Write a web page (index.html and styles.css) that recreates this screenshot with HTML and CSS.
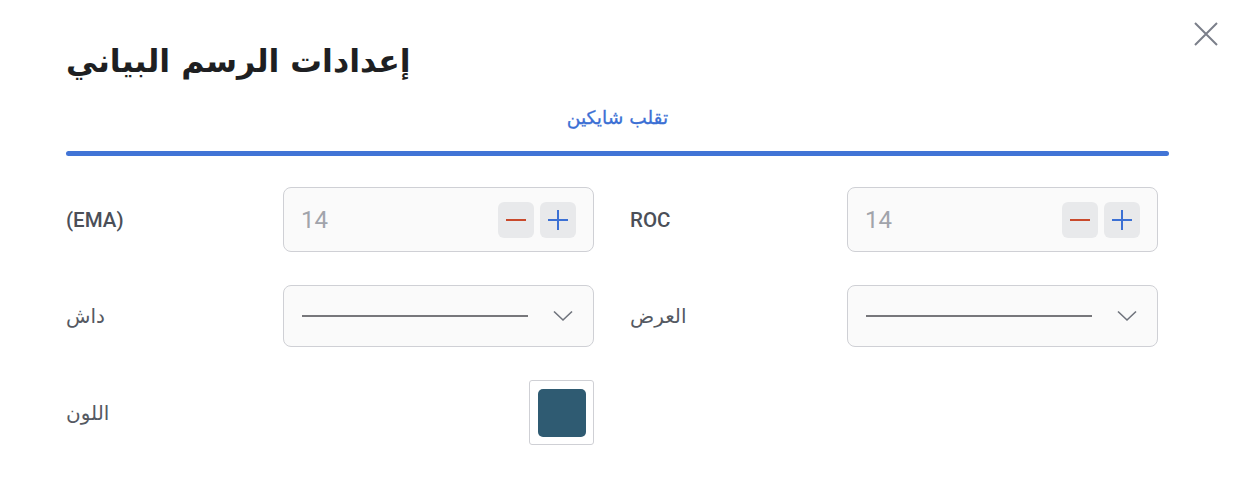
FILE: index.html
```html
<!DOCTYPE html>
<html lang="ar">
<head>
<meta charset="utf-8">
<link rel="stylesheet" href="styles.css">
</head>
<body>
<div class="modal">
  <button class="close" aria-label="إغلاق">
    <svg width="24" height="24" viewBox="0 0 24 24"><path d="M1 1 L23 23 M23 1 L1 23" stroke="#7b7f8a" stroke-width="2" fill="none"/></svg>
  </button>
  <h1 class="title">إعدادات الرسم البياني</h1>
  <div class="tabs">
    <div class="tab">تقلب شايكين</div>
    <div class="tab-bar"></div>
  </div>
  <div class="grid">
    <div class="field">
      <div class="label latin">(EMA)</div>
      <div class="box number">
        <span class="value">14</span>
        <div class="steps">
          <button class="step minus"><svg width="22" height="22" viewBox="0 0 22 22"><path d="M1 11 H21" stroke="#c9492b" stroke-width="2"/></svg></button>
          <button class="step plus"><svg width="22" height="22" viewBox="0 0 22 22"><path d="M1 11 H21 M11 1 V21" stroke="#3b70d4" stroke-width="2"/></svg></button>
        </div>
      </div>
    </div>
    <div class="field">
      <div class="label latin">ROC</div>
      <div class="box number">
        <span class="value">14</span>
        <div class="steps">
          <button class="step minus"><svg width="22" height="22" viewBox="0 0 22 22"><path d="M1 11 H21" stroke="#c9492b" stroke-width="2"/></svg></button>
          <button class="step plus"><svg width="22" height="22" viewBox="0 0 22 22"><path d="M1 11 H21 M11 1 V21" stroke="#3b70d4" stroke-width="2"/></svg></button>
        </div>
      </div>
    </div>
    <div class="field">
      <div class="label">داش</div>
      <div class="box select">
        <span class="line"></span>
        <svg class="chev" width="20" height="12" viewBox="0 0 20 12"><path d="M1 1.5 L10 10 L19 1.5" stroke="#6f737c" stroke-width="1.6" fill="none"/></svg>
      </div>
    </div>
    <div class="field">
      <div class="label">العرض</div>
      <div class="box select">
        <span class="line"></span>
        <svg class="chev" width="20" height="12" viewBox="0 0 20 12"><path d="M1 1.5 L10 10 L19 1.5" stroke="#6f737c" stroke-width="1.6" fill="none"/></svg>
      </div>
    </div>
    <div class="field">
      <div class="label">اللون</div>
      <div class="swatch-wrap"><div class="swatch"><span class="swatch-fill"></span></div></div>
    </div>
  </div>
</div>
</body>
</html>
```
FILE: styles.css
```css
* { box-sizing: border-box; }
html, body { margin: 0; padding: 0; background: #ffffff; }
body { font-family: Roboto, "DejaVu Sans", sans-serif; color: #1f2125; }
.modal { position: relative; width: 1238px; height: 492px; padding: 0 69px 0 66px; }
.close { position: absolute; top: 22px; left: 1194px; width: 24px; height: 24px; padding: 0; border: 0; background: none; cursor: pointer; }
.close svg { display: block; }
.title { margin: 0; padding-top: 31px; font-family: "DejaVu Sans", sans-serif; font-size: 31.6px; font-weight: 700; line-height: 60px; height: 96px; color: #1e1f22; }
.tabs { display: flex; flex-direction: column; align-items: center; }
.tab { font-family: "DejaVu Sans", sans-serif; font-size: 18.6px; font-weight: 400; color: #3b6fd4; line-height: 26px; height: 55px; padding-top: 9px; -webkit-text-stroke: 0.3px #3b6fd4; }
.tab-bar { width: 100%; height: 5px; background: #4174d6; border-radius: 3px; }
.grid { display: grid; grid-template-columns: 528px 528px; column-gap: 36px; row-gap: 33px; margin-top: 31px; }
.field { display: flex; align-items: center; justify-content: space-between; }
.label { font-family: "DejaVu Sans", sans-serif; font-size: 20px; font-weight: 400; color: #555962; }
.label.latin { font-family: Roboto, sans-serif; font-size: 20.5px; font-weight: 500; color: #4b4f58; }
.box { width: 311px; border: 1px solid #cfd0d5; border-radius: 8px; background: #fafafa; display: flex; align-items: center; }
.number { height: 65px; padding: 0 17px 0 17px; justify-content: space-between; }
.value { font-family: Roboto, sans-serif; font-size: 24px; color: #a1a4ab; }
.steps { display: flex; gap: 6px; }
.step { width: 36px; height: 36px; border: 0; border-radius: 6px; background: #e8e9eb; padding: 0; display: flex; align-items: center; justify-content: center; }
.step svg { display: block; }
.select { height: 62px; padding: 0 20px 0 18px; justify-content: space-between; }
.line { display: block; width: 226px; height: 2px; background: #77777b; }
.chev { display: block; }
.swatch-wrap { width: 311px; display: flex; justify-content: flex-end; }
.swatch { width: 65px; height: 65px; border: 1px solid #cfd0d5; border-radius: 3px; display: flex; align-items: center; justify-content: center; background: #fff; }
.swatch-fill { display: block; width: 48px; height: 48px; border-radius: 5px; background: #2f5b72; }
```
